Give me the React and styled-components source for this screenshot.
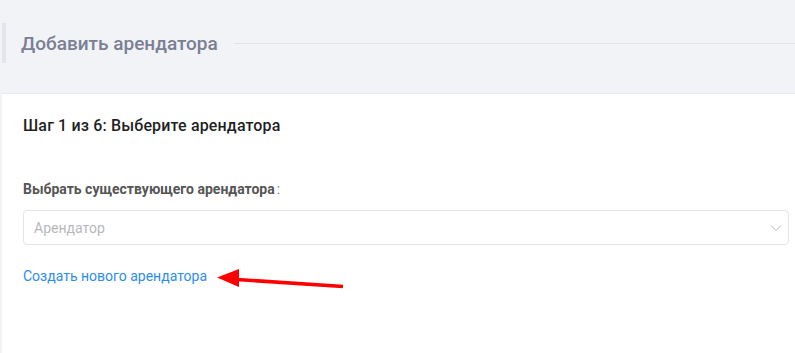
import React from "react";
import styled, { createGlobalStyle } from "styled-components";

const Global = createGlobalStyle`
  html, body { margin: 0; padding: 0; background: #f2f3f7; }
  body { font-family: Roboto, "Noto Sans", "Liberation Sans", sans-serif; }
  * { box-sizing: border-box; }
`;

const Page = styled.div`
  width: 795px;
  height: 353px;
  overflow: hidden;
  padding: 23px 0 0 2px;
  display: flex;
  flex-direction: column;
`;

const HeaderRow = styled.div`
  height: 40px;
  display: flex;
  align-items: center;
  border-left: 4px solid #e4e5ea;
  padding-left: 15px;
`;

const HeaderTitle = styled.h1`
  margin: 0;
  font-size: 19px;
  font-weight: 500;
  color: #7a7f94;
  white-space: nowrap;
`;

const HeaderLine = styled.div`
  flex: 1;
  height: 1px;
  background: #e2e3e8;
  margin-left: 16px;
`;

const Card = styled.div`
  margin-top: 30px;
  flex: 1;
  background: #fff;
  border-top: 1px solid #e8e9ee;
  padding: 22px 6px 0 21px;
  display: flex;
  flex-direction: column;
`;

const StepTitle = styled.h2`
  margin: 0;
  font-size: 16px;
  letter-spacing: 0.15px;
  line-height: 20px;
  font-weight: 500;
  color: #1f1f24;
`;

const Label = styled.label`
  margin-top: 44px;
  font-size: 14px;
  line-height: 18px;
  font-weight: 700;
  color: #555;
`;

const Colon = styled.span`
  color: #777;
  font-weight: 400;
  margin-left: 2px;
`;

const SelectBox = styled.div`
  margin-top: 12px;
  height: 35px;
  border: 1px solid #e4e4e7;
  border-radius: 4px;
  display: flex;
  align-items: center;
  justify-content: space-between;
  padding: 0 6px 0 10px;
`;

const Placeholder = styled.span`
  font-size: 14px;
  color: #b7b7bb;
`;

const LinkRow = styled.div`
  margin-top: 22px;
  display: flex;
  align-items: center;
  position: relative;
`;

const CreateLink = styled.a`
  font-size: 14px;
  line-height: 18px;
  color: #2d8cf0;
  text-decoration: none;
  cursor: pointer;
`;

const Arrow = styled.svg`
  position: absolute;
  left: 194px;
  top: 4px;
  overflow: visible;
`;

export default function App() {
  return (
    <>
      <Global />
      <Page>
        <HeaderRow>
          <HeaderTitle>Добавить арендатора</HeaderTitle>
          <HeaderLine />
        </HeaderRow>
        <Card>
          <StepTitle>Шаг 1 из 6: Выберите арендатора</StepTitle>
          <Label>
            Выбрать существующего арендатора<Colon>:</Colon>
          </Label>
          <SelectBox>
            <Placeholder>Арендатор</Placeholder>
            <svg width="12" height="8" viewBox="0 0 12 8">
              <path d="M1 1.5 L6 6.5 L11 1.5" fill="none" stroke="#b8b8bc" strokeWidth="1" />
            </svg>
          </SelectBox>
          <LinkRow>
            <CreateLink>Создать нового арендатора</CreateLink>
            <Arrow width="130" height="22" viewBox="0 0 130 22">
              <path d="M20 8.5 L126 15.5" stroke="#ff0000" strokeWidth="3.5" fill="none" />
              <polygon points="0,6.5 22,-2 22,16" fill="#ff0000" />
            </Arrow>
          </LinkRow>
        </Card>
      </Page>
    </>
  );
}
